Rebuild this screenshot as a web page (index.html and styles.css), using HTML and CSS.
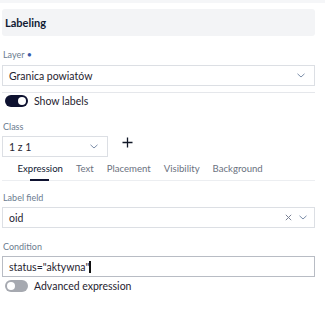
FILE: index.html
```html
<!DOCTYPE html>
<html>
<head>
<meta charset="utf-8">
<link rel="stylesheet" href="styles.css">
</head>
<body>
<div class="topstrip"></div>
<div class="panel">
  <div class="header">Labeling</div>

  <div class="label first">Layer <span class="req">•</span></div>
  <div class="select wide">
    <span class="val">Granica powiatów</span>
    <svg class="chev" width="8" height="5" viewBox="0 0 8 5"><path d="M0.5 0.8 L4 4 L7.5 0.8" fill="none" stroke="#7b8da8" stroke-width="1"/></svg>
  </div>
  <div class="sep"></div>
  <div class="toggle-row">
    <span class="toggle on"><span class="knob"></span></span>
    <span class="tlabel">Show labels</span>
  </div>

  <div class="label cls">Class</div>
  <div class="class-row">
    <div class="select small">
      <span class="val">1 z 1</span>
      <svg class="chev" width="8" height="5" viewBox="0 0 8 5"><path d="M0.5 0.8 L4 4 L7.5 0.8" fill="none" stroke="#7b8da8" stroke-width="1"/></svg>
    </div>
    <svg class="plus" width="11" height="11" viewBox="0 0 11 11"><path d="M5.5 0.5 V10.5 M0.5 5.5 H10.5" stroke="#111827" stroke-width="1.3"/></svg>
  </div>

  <div class="tabs">
    <span class="tab active">Expression</span>
    <span class="tab">Text</span>
    <span class="tab">Placement</span>
    <span class="tab">Visibility</span>
    <span class="tab">Background</span>
  </div>

  <div class="label lf">Label field</div>
  <div class="select wide">
    <span class="val">oid</span>
    <span class="icons">
      <svg width="7" height="7" viewBox="0 0 7 7"><path d="M0.8 0.8 L6.2 6.2 M6.2 0.8 L0.8 6.2" stroke="#7b8194" stroke-width="1"/></svg>
      <svg class="chev" width="8" height="5" viewBox="0 0 8 5"><path d="M0.5 0.8 L4 4 L7.5 0.8" fill="none" stroke="#7b8da8" stroke-width="1"/></svg>
    </span>
  </div>

  <div class="label cond">Condition</div>
  <div class="input"><span class="val">status="aktywna"</span><span class="caret"></span></div>
  <div class="toggle-row adv">
    <span class="toggle off"><span class="knob"></span></span>
    <span class="tlabel">Advanced expression</span>
  </div>
</div>
</body>
</html>
```
FILE: styles.css
```css
html, body {
  margin: 0;
  padding: 0;
  background: #ffffff;
  font-family: Lato, "Noto Sans", sans-serif;
  color: #1f2937;
}
.topstrip {
  height: 3px;
  background: #f5f6f8;
}
.panel {
  width: 313px;
  margin-left: 2px;
  display: flex;
  flex-direction: column;
}
.header {
  margin-top: 6px;
  height: 27px;
  background: #f3f4f6;
  border-radius: 3px;
  font-weight: 700;
  font-size: 11px;
  color: #111a33;
  display: flex;
  align-items: center;
  padding-left: 3px;
}
.label {
  font-size: 9px;
  color: #6b7c8f;
  height: 12px;
  line-height: 12px;
  padding-left: 1px;
}
.label.first { margin-top: 13px; }
.req { color: #3b5ba8; }
.select {
  box-sizing: border-box;
  height: 21px;
  border: 1px solid #dcdfe4;
  display: flex;
  align-items: center;
  justify-content: space-between;
  padding: 0 9px 0 6px;
  font-size: 10.5px;
  color: #1f2430;
  background: #fff;
}
.first + .select { margin-top: 4px; }
.select.small { width: 106px; }
.sep {
  margin-top: 6px;
  border-top: 1px solid #e5e7eb;
}
.toggle-row {
  display: flex;
  align-items: center;
  margin-top: 1px;
  height: 13px;
  padding-left: 3px;
}
.toggle {
  box-sizing: border-box;
  width: 23px;
  height: 12px;
  border-radius: 6px;
  position: relative;
  display: inline-block;
}
.toggle.on { background: #0e1230; }
.toggle.off { background: #a6a9b0; }
.knob {
  position: absolute;
  top: 2px;
  width: 8px;
  height: 8px;
  border-radius: 50%;
  background: #fff;
}
.toggle.on .knob { right: 2px; }
.toggle.off .knob { left: 2px; }
.tlabel {
  margin-left: 6px;
  font-size: 10.5px;
  color: #1f2430;
}
.label.cls { margin-top: 14px; }
.class-row {
  display: flex;
  align-items: flex-start;
  margin-top: 3px;
}
.plus { margin-left: 14px; margin-top: 1px; }
.tabs {
  display: flex;
  margin-top: 2px;
  height: 21px;
  border-bottom: 1px solid #eceef1;
  padding-left: 9px;
  font-size: 9.6px;
  color: #6b7280;
}
.tab {
  padding: 0 6.5px;
  line-height: 19px;
  position: relative;
}
.tab.active { color: #111a33; }
.tab.active::after {
  content: "";
  position: absolute;
  left: calc(50% - 10px);
  width: 19px;
  bottom: -1px;
  height: 2px;
  background: #0e1230;
}
.label.lf { margin-top: 11px; }
.lf + .select { margin-top: 3px; }
.icons { display: flex; align-items: center; gap: 7px; margin-right: -2px; }
.label.cond { margin-top: 13px; }
.input {
  box-sizing: border-box;
  margin-top: 3px;
  height: 21px;
  border: 1px solid #b8bcc4;
  display: flex;
  align-items: center;
  padding-left: 6px;
  font-size: 10.5px;
  color: #1f2430;
}
.caret {
  display: inline-block;
  width: 2px;
  height: 12px;
  background: #111;
  margin-left: 0px;
}
.adv { margin-top: 2px; }
```
